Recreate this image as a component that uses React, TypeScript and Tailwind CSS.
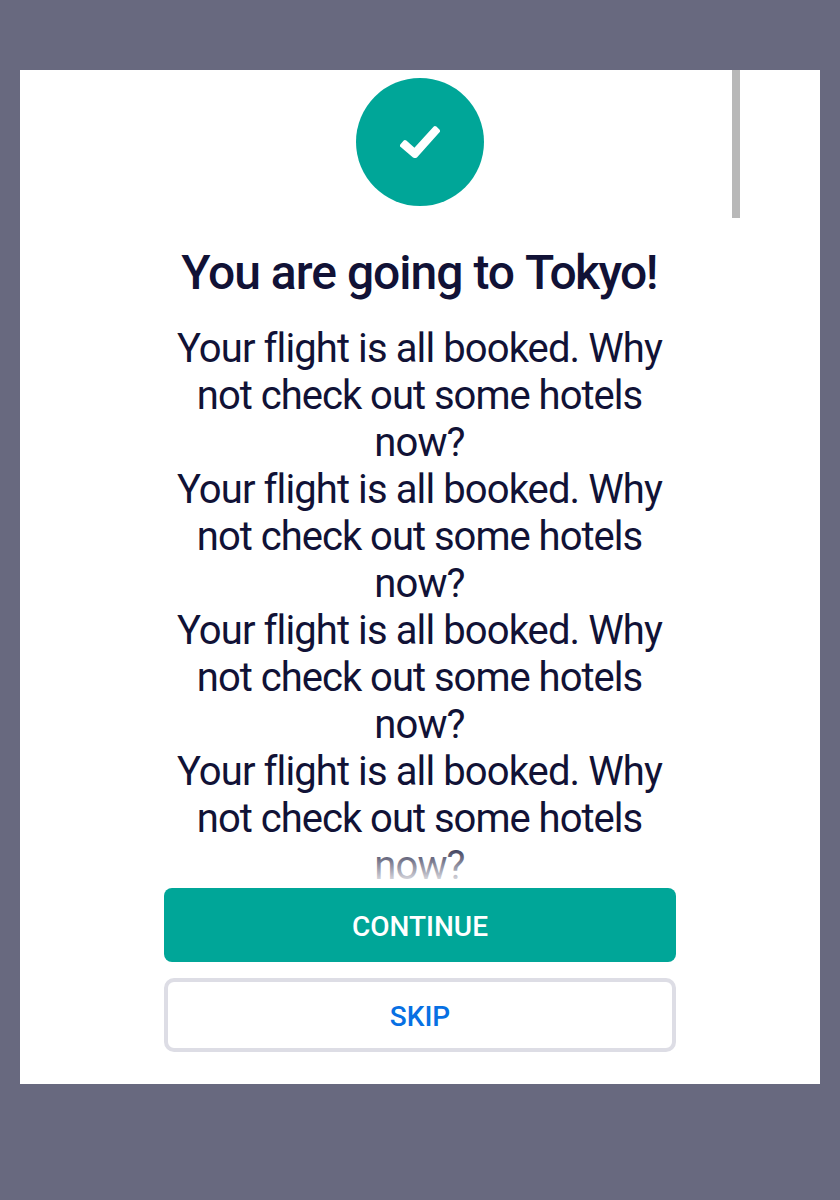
export default function App() {
  return (
    <div className="h-[1200px] w-[840px] bg-[#68697f] px-5 pt-[70px] font-[Roboto,sans-serif] text-[#111236] antialiased">
      <main className="relative flex h-[1014px] flex-col items-center bg-white pt-2">
        <div className="absolute right-20 top-0 h-[148px] w-2 bg-[#b8b8b8]" />
        <div className="flex size-32 shrink-0 items-center justify-center rounded-full bg-[#00a698]">
          <svg viewBox="0 0 40 34" className="h-[34px] w-10" aria-hidden="true">
            <path d="M2 20.5 L5 17 L14.5 25.5 L35 3 L38 6 L15.7 31 L14.3 31 Z" fill="white" stroke="white" strokeWidth="4" strokeLinejoin="round" />
          </svg>
        </div>
        <h1 className="mt-[39px] h-14 whitespace-nowrap pr-0.5 text-[48px] font-medium leading-[56px] tracking-[-1px]">
          You are going to <span className="tracking-[-1.6px]">Tokyo!</span>
        </h1>
        <section className="relative mt-6 h-[563px] w-[512px] overflow-hidden pr-px text-center text-[40px] leading-[47px] tracking-[-0.9px]">
          {[0, 1, 2, 3].map((n) => (
            <p key={n}>
              Your flight is all booked. Why<br />
              <span className="tracking-[-1px]">not check out some hotels</span><br />
              now?
            </p>
          ))}
          <div className="absolute inset-x-0 bottom-0 h-12 bg-linear-to-b from-white/0 to-white" />
        </section>
        <div className="flex w-[512px] flex-col gap-4 text-[28px] font-medium">
          <button className="h-[74px] rounded-lg bg-[#00a698] pt-1 text-white">CONTINUE</button>
          <button className="h-[74px] rounded-[10px] border-4 border-[#dddde5] pt-1 text-[#0770e3]">SKIP</button>
        </div>
      </main>
    </div>
  );
}
